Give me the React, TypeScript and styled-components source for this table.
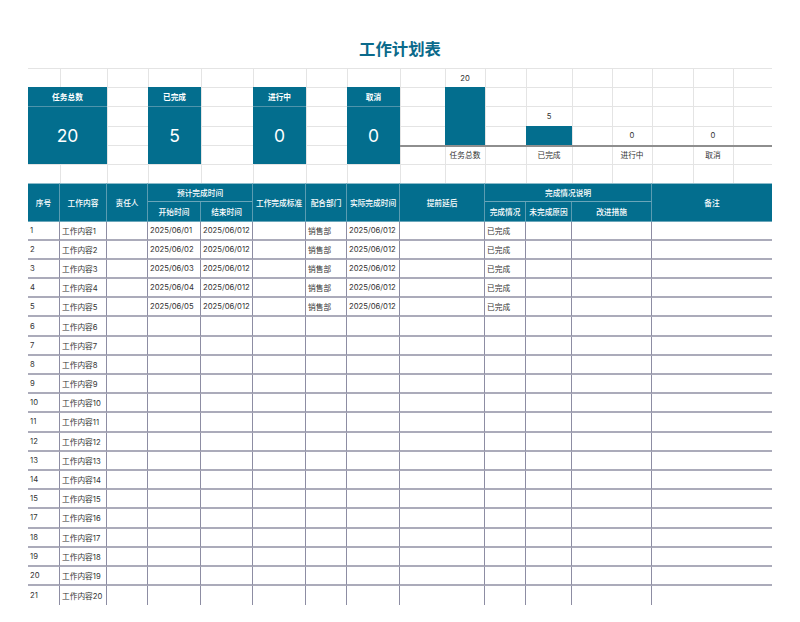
import React from "react";
import styled, { createGlobalStyle } from "styled-components";

const TEAL = "#036e8e";
const GRID_LINE = "#e4e4e4";
const COLS = [32, 47, 41, 53, 52, 53, 41, 53, 45, 40, 41, 46, 40, 40, 41, 40, 39];
const ROW_H = "19.2px";
const FONT = `"Inter", "Noto Sans CJK SC", sans-serif`;

const GlobalStyle = createGlobalStyle`
  html, body { margin: 0; padding: 0; background: #ffffff; }
  body { font-family: ${FONT}; }
`;

const Page = styled.div`
  width: 800px;
  padding: 0 28px;
  box-sizing: border-box;
`;

const Title = styled.h1`
  margin: 0;
  height: 68px;
  padding-top: 37px;
  box-sizing: border-box;
  line-height: 22px;
  text-align: center;
  font-size: 16.4px;
  font-weight: 700;
  color: #0b6a8b;
  font-family: "Noto Sans CJK SC", sans-serif;
`;

const Summary = styled.div`
  display: grid;
  grid-template-columns: ${COLS.map((c) => `${c}px`).join(" ")};
  grid-template-rows: repeat(6, ${ROW_H});
`;

const GridCell = styled.div<{ $r: number; $c: number }>`
  grid-row: ${(p) => p.$r};
  grid-column: ${(p) => p.$c};
  border-top: 1px solid ${GRID_LINE};
  border-left: ${(p) => (p.$c === 1 ? "none" : `1px solid ${GRID_LINE}`)};
`;

const CardHead = styled.div<{ $col: string }>`
  grid-row: 2;
  grid-column: ${(p) => p.$col};
  background: ${TEAL};
  color: #ffffff;
  font-size: 7.7px;
  font-weight: 700;
  font-family: "Noto Sans CJK SC", sans-serif;
  display: flex;
  align-items: center;
  justify-content: center;
`;

const CardValue = styled.div<{ $col: string }>`
  grid-row: 3 / 6;
  grid-column: ${(p) => p.$col};
  background: ${TEAL};
  border-top: 1px solid #4f94ab;
  color: #ffffff;
  font-size: 17.5px;
  font-weight: 400;
  font-family: ${FONT};
  display: flex;
  align-items: center;
  justify-content: center;
`;

const Bar = styled.div<{ $col: number; $rows: string }>`
  grid-column: ${(p) => p.$col};
  grid-row: ${(p) => p.$rows};
  background: ${TEAL};
`;

const Baseline = styled.div`
  grid-column: 9 / 18;
  grid-row: 5;
  align-self: start;
  height: 0;
  border-top: 2px solid #8e8e8e;
`;

const ChartLabel = styled.div<{ $col: number; $row: number }>`
  grid-column: ${(p) => p.$col};
  grid-row: ${(p) => p.$row};
  display: flex;
  align-items: center;
  justify-content: center;
  font-size: 7.7px;
  color: #333333;
  white-space: nowrap;
  padding-top: 1px;
`;

const Sheet = styled.table`
  width: 744px;
  table-layout: fixed;
  border-collapse: separate;
  border-spacing: 0;
  font-size: 7.7px;
  color: #333333;
  font-family: ${FONT};
`;

const HeadRow = styled.tr`
  height: ${ROW_H};
`;

const HeadCell = styled.th<{ $top?: boolean; $last?: boolean }>`
  background: ${TEAL};
  color: #ffffff;
  font-weight: 500;
  text-align: center;
  vertical-align: middle;
  padding: 0;
  white-space: nowrap;
  border-top: ${(p) => (p.$top ? "1px solid #8dbccb" : "none")};
  border-right: ${(p) => (p.$last ? "none" : "1px solid #5a9cb2")};
  border-bottom: 1px solid #6aa6ba;
`;

const DataRow = styled.tr`
  height: ${ROW_H};
`;

const DataCell = styled.td<{ $last?: boolean; $bottom?: boolean }>`
  padding: 0 0 0 2px;
  vertical-align: middle;
  text-align: left;
  white-space: nowrap;
  overflow: hidden;
  border-right: ${(p) => (p.$last ? "none" : "1px solid #8d8da3")};
  border-bottom: ${(p) => (p.$bottom ? "none" : "2px solid #ababba")};
`;

type Row = {
  no: number;
  content: string;
  start?: string;
  end?: string;
  dept?: string;
  actual?: string;
  status?: string;
};

const rows: Row[] = Array.from({ length: 20 }, (_, i) => {
  const no = i < 15 ? i + 1 : i + 2;
  const r: Row = { no, content: `工作内容${i + 1}` };
  if (i < 5) {
    r.start = `2025/06/0${i + 1}`;
    r.end = "2025/06/012";
    r.dept = "销售部";
    r.actual = "2025/06/012";
    r.status = "已完成";
  }
  return r;
});

const cards = [
  { label: "任务总数", value: "20", col: "1 / 3" },
  { label: "已完成", value: "5", col: "4" },
  { label: "进行中", value: "0", col: "6" },
  { label: "取消", value: "0", col: "8" },
];

const chart = [
  { label: "任务总数", value: "20", col: 10, valueRow: 1, bar: "2 / 5" },
  { label: "已完成", value: "5", col: 12, valueRow: 3, bar: "4" },
  { label: "进行中", value: "0", col: 14, valueRow: 4, bar: "" },
  { label: "取消", value: "0", col: 16, valueRow: 4, bar: "" },
];

export default function App() {
  const bgCells: React.ReactNode[] = [];
  for (let r = 1; r <= 6; r++) {
    for (let c = 1; c <= COLS.length; c++) {
      bgCells.push(<GridCell key={`${r}-${c}`} $r={r} $c={c} />);
    }
  }

  return (
    <>
      <GlobalStyle />
      <Page>
        <Title>工作计划表</Title>
        <Summary>
          {bgCells}
          {cards.map((k) => (
            <React.Fragment key={k.label}>
              <CardHead $col={k.col}>{k.label}</CardHead>
              <CardValue $col={k.col}>{k.value}</CardValue>
            </React.Fragment>
          ))}
          {chart.map((b) =>
            b.bar ? <Bar key={`bar-${b.label}`} $col={b.col} $rows={b.bar} /> : null
          )}
          <Baseline />
          {chart.map((b) => (
            <React.Fragment key={`lbl-${b.label}`}>
              <ChartLabel $col={b.col} $row={b.valueRow}>
                {b.value}
              </ChartLabel>
              <ChartLabel $col={b.col} $row={5}>
                {b.label}
              </ChartLabel>
            </React.Fragment>
          ))}
        </Summary>
        <Sheet>
          <colgroup>
            {COLS.map((w, i) => (
              <col key={i} style={{ width: `${w}px` }} />
            ))}
          </colgroup>
          <thead>
            <HeadRow>
              <HeadCell $top rowSpan={2}>序号</HeadCell>
              <HeadCell $top rowSpan={2}>工作内容</HeadCell>
              <HeadCell $top rowSpan={2}>责任人</HeadCell>
              <HeadCell $top colSpan={2}>预计完成时间</HeadCell>
              <HeadCell $top rowSpan={2}>工作完成标准</HeadCell>
              <HeadCell $top rowSpan={2}>配合部门</HeadCell>
              <HeadCell $top rowSpan={2}>实际完成时间</HeadCell>
              <HeadCell $top rowSpan={2} colSpan={2}>提前延后</HeadCell>
              <HeadCell $top colSpan={4}>完成情况说明</HeadCell>
              <HeadCell $top $last rowSpan={2} colSpan={3}>备注</HeadCell>
            </HeadRow>
            <HeadRow>
              <HeadCell>开始时间</HeadCell>
              <HeadCell>结束时间</HeadCell>
              <HeadCell>完成情况</HeadCell>
              <HeadCell>未完成原因</HeadCell>
              <HeadCell colSpan={2}>改进措施</HeadCell>
            </HeadRow>
          </thead>
          <tbody>
            {rows.map((r, i) => {
              const bottom = i === rows.length - 1;
              return (
                <DataRow key={r.no}>
                  <DataCell $bottom={bottom}>{r.no}</DataCell>
                  <DataCell $bottom={bottom}>{r.content}</DataCell>
                  <DataCell $bottom={bottom} />
                  <DataCell $bottom={bottom}>{r.start}</DataCell>
                  <DataCell $bottom={bottom}>{r.end}</DataCell>
                  <DataCell $bottom={bottom} />
                  <DataCell $bottom={bottom}>{r.dept}</DataCell>
                  <DataCell $bottom={bottom}>{r.actual}</DataCell>
                  <DataCell $bottom={bottom} colSpan={2} />
                  <DataCell $bottom={bottom}>{r.status}</DataCell>
                  <DataCell $bottom={bottom} />
                  <DataCell $bottom={bottom} colSpan={2} />
                  <DataCell $bottom={bottom} $last colSpan={3} />
                </DataRow>
              );
            })}
          </tbody>
        </Sheet>
      </Page>
    </>
  );
}
